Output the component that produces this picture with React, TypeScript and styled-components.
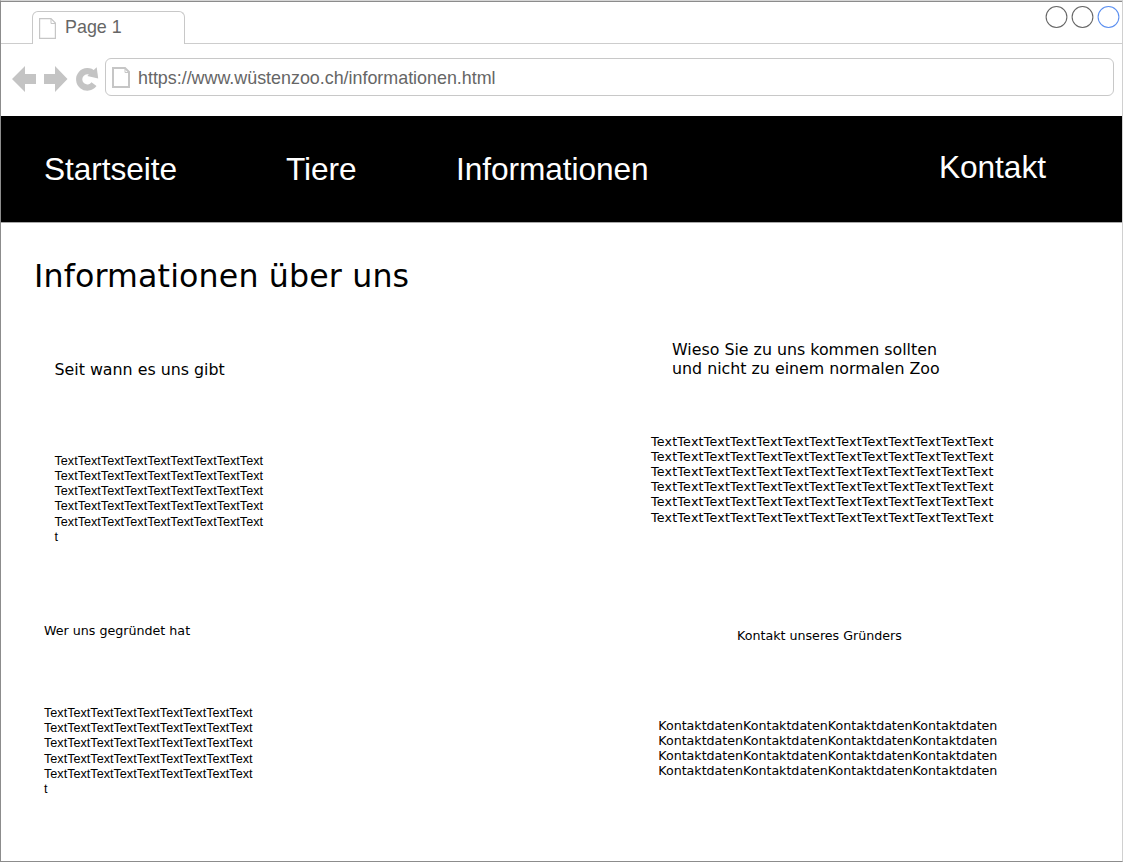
import React from "react";
import styled, { createGlobalStyle } from "styled-components";

const GlobalStyle = createGlobalStyle`
  * { box-sizing: border-box; }
  body { margin: 0; background: #fff; }
`;

const sans = `"Liberation Sans", Arial, sans-serif`;
const verdana = `"DejaVu Sans", Verdana, sans-serif`;

const Window = styled.div`
  width: 1123px;
  height: 862px;
  display: flex;
  flex-direction: column;
  overflow: hidden;
  background: #fff;
  border-left: 1px solid #8c8c8c;
  border-right: 1px solid #d0d0d0;
  border-top: 1px solid #d6d6d6;
  border-bottom: 1px solid #8c8c8c;
`;

const TabStrip = styled.div`
  height: 43px;
  flex: none;
  display: flex;
  justify-content: space-between;
  align-items: flex-start;
  border-top: 1px solid #8c8c8c;
  border-bottom: 1px solid #cdcdcd;
  padding-left: 31px;
`;

const Tab = styled.div`
  width: 153px;
  height: 33px;
  margin-top: 9px;
  padding: 6px 0 0 6px;
  display: flex;
  align-items: flex-start;
  gap: 9px;
  background: #fff;
  border: 1px solid #c8c8c8;
  border-bottom: 0;
  border-radius: 6px 6px 0 0;
`;

const TabLabel = styled.span`
  font: 17.9px/20px ${sans};
  color: #666;
  margin-top: -1px;
`;

const WindowButtons = styled.div`
  display: flex;
  gap: 4px;
  padding-top: 4px;
  margin-right: 2px;
`;

const Circle = styled.svg`
  display: block;
  overflow: visible;
`;

const Toolbar = styled.div`
  height: 72px;
  flex: none;
  display: flex;
  align-items: flex-start;
  padding: 14px 8px 0 11px;
`;

const NavIcons = styled.svg`
  flex: none;
  margin-top: 6px;
`;

const AddressBar = styled.div`
  flex: 1;
  height: 38px;
  margin-left: 6px;
  padding: 1px 0 0 6px;
  display: flex;
  align-items: center;
  gap: 8px;
  border: 1px solid #c8c8c8;
  border-radius: 6px;
`;

const Url = styled.span`
  font: 17.9px/20px ${sans};
  letter-spacing: -0.01px;
  color: #666;
`;

const SiteNav = styled.nav`
  height: 106px;
  flex: none;
  display: grid;
  grid-template-columns: 242px 170px 483px 1fr;
  padding: 34px 0 0 43px;
  margin: 0 -1px;
  border-left: 1px solid #1c1c1c;
  background: #000;
`;

const NavLink = styled.a<{ $raise?: boolean }>`
  font: 31.67px/38px ${sans};
  letter-spacing: -0.07px;
  color: #fff;
  margin-top: ${(p) => (p.$raise ? "-2px" : "0")};
`;

const Content = styled.main`
  flex: 1;
  border-top: 1px solid #a8a8a8;
  padding: 34px 0 0 33px;
`;

const Title = styled.h1`
  margin: 0;
  font: 400 31.67px/38px ${verdana};
  letter-spacing: 0.14px;
  color: #000;
`;

const Columns = styled.div`
  display: grid;
  grid-template-columns: 617px 1fr;
`;

const Column = styled.div`
  display: flex;
  flex-direction: column;
  align-items: flex-start;
`;

const Heading = styled.h2<{ $small?: boolean; $top: number; $left: number }>`
  margin: ${(p) => p.$top}px 0 0 ${(p) => p.$left}px;
  font: 400 ${(p) => (p.$small ? "12.67px/15px" : "15.83px/19px")} ${verdana};
  white-space: pre-line;
  color: #000;
`;

const Copy = styled.p<{ $wide?: boolean; $spacing?: number; $top: number; $left: number }>`
  margin: ${(p) => p.$top}px 0 0 ${(p) => p.$left}px;
  font: 12.67px/15.2px ${(p) => (p.$wide ? verdana : sans)};
  letter-spacing: ${(p) => p.$spacing ?? 0}px;
  white-space: pre-line;
  color: #000;
`;

const PageIcon = ({ w, h, s }: { w: number; h: number; s: number }) => (
  <svg width={w} height={h} viewBox={`0 0 ${w} ${h}`} fill="none" stroke="#c6c6c6">
    <path strokeWidth={s} d={`M${s / 2} ${s / 2}H${w - 5}L${w - s / 2} 5V${h - s / 2}H${s / 2}Z`} />
    <path strokeWidth="1" d={`M${w - 5} 1V5.5H${w - 1}`} />
  </svg>
);

const lines = (word: string, perLine: number, count: number, tail = "") =>
  Array(count).fill(word.repeat(perLine)).join("\n") + (tail ? "\n" + tail : "");

export default function App() {
  return (
    <>
      <GlobalStyle />
      <Window>
        <TabStrip>
          <Tab>
            <PageIcon w={17} h={21} s={1.2} />
            <TabLabel>Page 1</TabLabel>
          </Tab>
          <WindowButtons>
            {["#666", "#666", "#5b8ff0"].map((c, i) => (
              <Circle key={i} width="22" height="22" viewBox="0 0 22 22">
                <circle cx="10.5" cy="11" r="10.4" fill="none" stroke={c} strokeWidth="1.05" />
              </Circle>
            ))}
          </WindowButtons>
        </TabStrip>
        <Toolbar>
          <NavIcons width="87" height="28" viewBox="0 0 87 28">
            <g fill="#c4c4c4">
              <path d="M0 15L13 2V10H24V20H13V28Z" />
              <path d="M55.5 15L43 2V10H32V20H43V28Z" />
              <path d="M84.7 3.3L86.2 14.5L75.3 11.9Z" />
            </g>
            <path d="M81.2 9.6A8.2 8.2 0 1 0 82 20.2" fill="none" stroke="#c4c4c4" strokeWidth="6.2" />
          </NavIcons>
          <AddressBar>
            <PageIcon w={18} h={21} s={2} />
            <Url>https://www.wüstenzoo.ch/informationen.html</Url>
          </AddressBar>
        </Toolbar>
        <SiteNav>
          <NavLink>Startseite</NavLink>
          <NavLink>Tiere</NavLink>
          <NavLink>Informationen</NavLink>
          <NavLink $raise>Kontakt</NavLink>
        </SiteNav>
        <Content>
          <Title>Informationen über uns</Title>
          <Columns>
            <Column>
              <Heading $top={65} $left={20.5}>Seit wann es uns gibt</Heading>
              <Copy $top={74.8} $left={20.5} $spacing={-0.01}>{lines("Text", 9, 5, "t")}</Copy>
              <Heading $small $top={78.2} $left={10}>Wer uns gegründet hat</Heading>
              <Copy $top={67.8} $left={10} $spacing={-0.01}>{lines("Text", 9, 5, "t")}</Copy>
            </Column>
            <Column>
              <Heading $top={44.5} $left={21}>{"Wieso Sie zu uns kommen sollten\nund nicht zu einem normalen Zoo"}</Heading>
              <Copy $wide $spacing={0.19} $top={56} $left={0}>{lines("Text", 13, 6)}</Copy>
              <Heading $small $top={103.5} $left={86}>Kontakt unseres Gründers</Heading>
              <Copy $wide $spacing={-0.02} $top={74.5} $left={7.3}>{lines("Kontaktdaten", 4, 4)}</Copy>
            </Column>
          </Columns>
        </Content>
      </Window>
    </>
  );
}
